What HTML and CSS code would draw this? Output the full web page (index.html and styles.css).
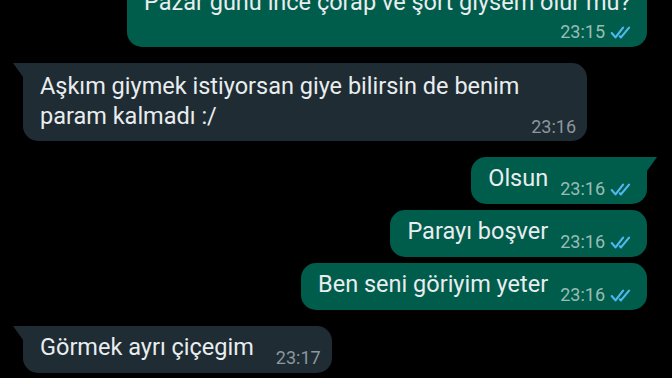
FILE: index.html
```html
<!DOCTYPE html>
<html lang="tr">
<head>
    <meta charset="UTF-8">
    <meta name="viewport" content="width=device-width, initial-scale=1.0">
    <title>Sohbet</title>
    <link rel="stylesheet" href="styles.css">
</head>
<body>
    <div class="chat">
        <div class="row out">
            <div class="bubble wrapped tail">
                <span class="text">Pazar günü ince çorap ve şort giysem olur mu?</span>
                <span class="meta">
                    <span class="time">23:15</span>
                    <svg class="ticks" viewBox="0 0 22 12"><polyline points="1.5,6.5 5,10.5 12,1.5"/><polyline points="9,9.5 10,10.5 17.5,1.5"/></svg>
                </span>
            </div>
        </div>

        <div class="row in first">
            <div class="bubble two-line tail">
                <span class="text">Aşkım giymek istiyorsan giye bilirsin de benim param kalmadı :/</span>
                <span class="meta"><span class="time">23:16</span></span>
            </div>
        </div>

        <div class="row out first">
            <div class="bubble tail">
                <span class="text">Olsun</span>
                <span class="meta">
                    <span class="time">23:16</span>
                    <svg class="ticks" viewBox="0 0 22 12"><polyline points="1.5,6.5 5,10.5 12,1.5"/><polyline points="9,9.5 10,10.5 17.5,1.5"/></svg>
                </span>
            </div>
        </div>
        <div class="row out">
            <div class="bubble">
                <span class="text">Parayı boşver</span>
                <span class="meta">
                    <span class="time">23:16</span>
                    <svg class="ticks" viewBox="0 0 22 12"><polyline points="1.5,6.5 5,10.5 12,1.5"/><polyline points="9,9.5 10,10.5 17.5,1.5"/></svg>
                </span>
            </div>
        </div>
        <div class="row out">
            <div class="bubble">
                <span class="text">Ben seni göriyim yeter</span>
                <span class="meta">
                    <span class="time">23:16</span>
                    <svg class="ticks" viewBox="0 0 22 12"><polyline points="1.5,6.5 5,10.5 12,1.5"/><polyline points="9,9.5 10,10.5 17.5,1.5"/></svg>
                </span>
            </div>
        </div>

        <div class="row in first">
            <div class="bubble tail">
                <span class="text">Görmek ayrı çiçegim</span>
                <span class="meta"><span class="time">23:17</span></span>
            </div>
        </div>
        <div class="row in">
            <div class="bubble">
                <span class="text">Ama seni özledim</span>
                <span class="meta"><span class="time">23:17</span></span>
            </div>
        </div>
    </div>
</body>
</html>
```

FILE: styles.css
```css
html, body {
    margin: 0;
    height: 378px;
    overflow: hidden;
    background-color: #000000;
}
body {
    font-family: Roboto, "Noto Sans", sans-serif;
    color: #e9edef;
}
.chat {
    display: flex;
    flex-direction: column;
    margin-top: -19px;
    padding: 0 25px 0 23px;
}
.row {
    display: flex;
    margin-top: 6px;
}
.row.first {
    margin-top: 16px;
}
.row:first-child {
    margin-top: 0;
}
.row.out {
    justify-content: flex-end;
}
.bubble {
    position: relative;
    display: flow-root;
    padding: 6px 13px 5px 17px;
    border-radius: 15px;
    box-sizing: border-box;
    font-size: 23.5px;
    line-height: 30px;
}
.bubble.two-line {
    padding-top: 8px;
    padding-bottom: 4px;
}
.out .bubble {
    max-width: 520px;
    background-color: #005c4b;
}
.in .bubble {
    max-width: 564px;
    padding-right: 11px;
    background-color: #1f2c33;
}
/* time + ticks sit at the bottom right, next to the last line */
.meta {
    float: right;
    display: flex;
    align-items: center;
    gap: 5px;
    height: 20px;
    margin: 16px 0 0 12px;
    line-height: 20px;
}
.in .meta {
    margin-left: 22px;
}
.wrapped .meta {
    margin-top: 5px;
}
.time {
    font-size: 18px;
    color: rgba(255, 255, 255, 0.6);
}
.in .time {
    color: #8c979e;
}
.ticks {
    width: 24px;
    height: 13px;
    fill: none;
    stroke: #4fb8ee;
    stroke-width: 2;
    stroke-linecap: round;
    stroke-linejoin: round;
}

/* little corner tail on the first bubble of a group */
.out .bubble.tail {
    border-top-right-radius: 0;
}
.in .bubble.tail {
    border-top-left-radius: 0;
}
.bubble.tail::after {
    content: "";
    position: absolute;
    top: 0;
    width: 10px;
    height: 14px;
    background: inherit;
}
.out .bubble.tail::after {
    right: -10px;
    clip-path: polygon(0 0, 100% 0, 0 100%);
}
.in .bubble.tail::after {
    left: -10px;
    clip-path: polygon(100% 0, 0 0, 100% 100%);
}
```
